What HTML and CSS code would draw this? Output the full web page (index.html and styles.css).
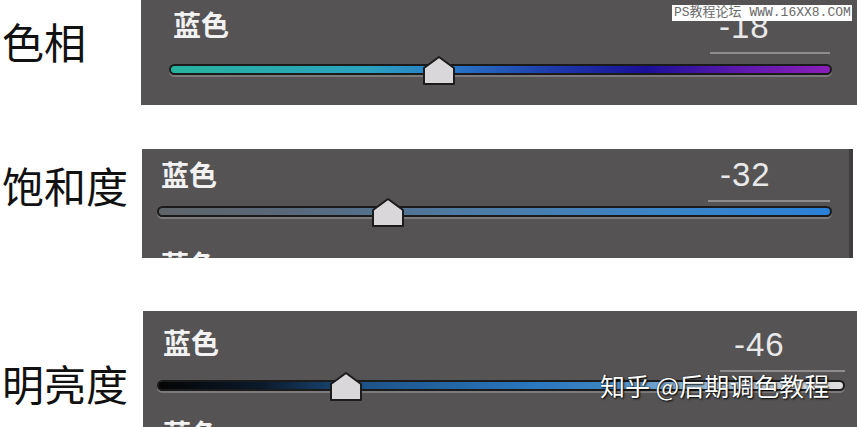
FILE: index.html
```html
<!DOCTYPE html>
<html lang="zh-CN">

<head>
  <title>色相 / 饱和度 / 明亮度</title>
  <meta charset="utf-8">
  <link rel="stylesheet" href="styles.css">
</head>

<body>
  <main>
    <div class="row row-hue">
      <h2 class="term">色相</h2>
      <div class="panel panel-hue">
        <div class="head">
          <span class="channel">蓝色</span>
          <div class="value">-18</div>
        </div>
        <div class="track">
          <svg class="thumb" style="left: 40.6%" viewBox="0 0 34 31" width="34" height="31">
            <path d="M2 13 L17 2 L32 13 L32 29 L2 29 Z" />
          </svg>
        </div>
        <div class="stamp">PS教程论坛 WWW.16XX8.COM</div>
      </div>
    </div>

    <div class="row row-sat">
      <h2 class="term">饱和度</h2>
      <div class="panel panel-sat">
        <div class="head">
          <span class="channel">蓝色</span>
          <div class="value">-32</div>
        </div>
        <div class="track">
          <svg class="thumb" style="left: 34.2%" viewBox="0 0 34 31" width="34" height="31">
            <path d="M2 13 L17 2 L32 13 L32 29 L2 29 Z" />
          </svg>
        </div>
        <span class="channel next">蓝色</span>
      </div>
    </div>

    <div class="row row-lum">
      <h2 class="term">明亮度</h2>
      <div class="panel panel-lum">
        <div class="head">
          <span class="channel">蓝色</span>
          <div class="value">-46</div>
        </div>
        <div class="track">
          <svg class="thumb" style="left: 27.3%" viewBox="0 0 34 31" width="34" height="31">
            <path d="M2 13 L17 2 L32 13 L32 29 L2 29 Z" />
          </svg>
        </div>
        <span class="channel next">蓝色</span>
        <div class="credit">知乎 @后期调色教程</div>
      </div>
    </div>
  </main>
</body>

</html>
```

FILE: styles.css
```css
* {
  box-sizing: border-box;
}

body {
  margin: 0;
  background-color: #ffffff;
  font-family: "Noto Sans CJK SC", sans-serif;
}

.row {
  display: flex;
}

.row-hue {
  height: 105px;
  margin-bottom: 44px;
}

.row-sat {
  height: 109px;
  margin-bottom: 53px;
}

.row-lum {
  height: 116px;
}

.term {
  width: 141px;
  flex-shrink: 0;
  margin: 0;
  padding-left: 2px;
  font-size: 42px;
  font-weight: normal;
  line-height: 1;
  color: #111111;
}

.row-hue .term {
  margin-top: 20px;
}

.row-sat .term {
  margin-top: 15px;
  width: 142px;
}

.row-lum .term {
  margin-top: 51px;
  width: 143px;
}

.panel {
  position: relative;
  flex: 1;
  overflow: hidden;
  background-color: #555354;
}

.head {
  display: flex;
  justify-content: space-between;
  align-items: flex-start;
}

.channel {
  display: block;
  font-size: 28px;
  line-height: 34px;
  font-weight: bold;
  color: #f2f2f2;
}

.value {
  width: 120px;
  padding: 1px 0 8px 11px;
  border-bottom: 2px solid #8e8c8d;
  font-family: "Liberation Sans", sans-serif;
  font-size: 33px;
  line-height: 34px;
  letter-spacing: 1px;
  color: #e8e8e8;
}

.track {
  position: relative;
  height: 11px;
  border: 2px solid #1b1b1b;
  border-radius: 6px;
  box-shadow: 0 2px 0 #7c7a7b;
}

.thumb {
  position: absolute;
  top: -11px;
  transform: translateX(-50%);
}

.thumb path {
  fill: #d9d7d9;
  stroke: #1c1c1c;
  stroke-width: 2;
  stroke-linejoin: round;
}

/* hue */
.panel-hue {
  padding: 7px 25px 0 28px;
}

.panel-hue .channel {
  margin-left: 4px;
}

.panel-hue .value {
  margin-top: 2px;
  margin-right: 2px;
  padding-left: 9px;
}

.panel-hue .track {
  margin-top: 10px;
  background: linear-gradient(90deg, #27b39e 0%, #2aa2bf 30%, #2a78c8 42%, #1d3aaa 58%, #1a0f98 72%, #5c18ad 86%, #8a1fb8 100%);
}

.stamp {
  position: absolute;
  left: 531px;
  top: 5px;
  width: 180px;
  height: 16px;
  background-color: #ffffff;
  font-family: "Liberation Mono", "Noto Sans CJK SC", monospace;
  font-size: 13px;
  line-height: 16px;
  color: #6a6a6a;
  white-space: nowrap;
  padding-left: 2px;
}

/* saturation */
.panel-sat {
  padding: 8px 17px 0 15px;
  border-right: 4px solid #3f3d3e;
  flex: none;
  width: 711px;
}

.panel-sat .channel {
  margin-left: 4px;
}

.panel-sat .value {
  width: 122px;
  margin-right: 2px;
  padding-left: 12px;
}

.panel-sat .track {
  margin-top: 4px;
  background: linear-gradient(90deg, #5f6468 0%, #58687a 20%, #4e7aa2 45%, #3b84c6 75%, #2a80d8 100%);
}

.panel-sat .next {
  margin-top: 30px;
}

/* luminance */
.panel-lum {
  padding: 14px 12px 0 14px;
}

.panel-lum .channel {
  margin-left: 6px;
}

.panel-lum .value {
  width: 125px;
  margin-top: 2px;
  padding-left: 14px;
}

.panel-lum .track {
  margin-top: 8px;
  background: linear-gradient(90deg, #050505 0%, #0b1a2b 15%, #1d5388 30%, #2a78c0 55%, #3a82c2 64%, #9ab9d2 80%, #c8d0d8 92%, #dedede 100%);
}

.panel-lum .next {
  margin-top: 25px;
}

.credit {
  position: absolute;
  left: 457px;
  top: 59px;
  font-size: 25px;
  line-height: 30px;
  color: #ffffff;
  text-shadow: 1px 1px 2px #000000, 0 0 1px #000000;
  white-space: nowrap;
}
```
